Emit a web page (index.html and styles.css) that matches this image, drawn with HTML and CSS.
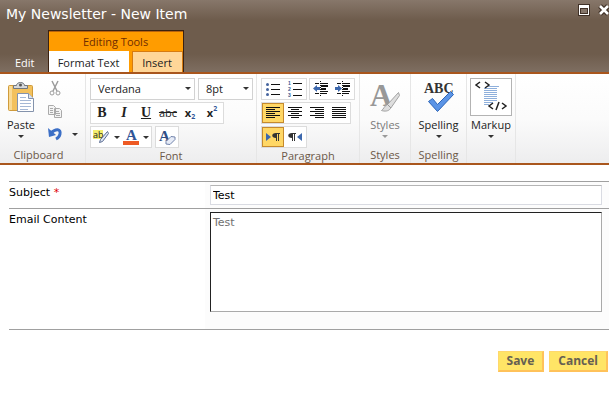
FILE: index.html
```html
<!DOCTYPE html>
<html lang="en">
<head>
  <meta charset="UTF-8">
  <meta name="viewport" content="width=device-width, initial-scale=1">
  <title>My Newsletter - New Item</title>
  <link rel="stylesheet" href="styles.css">
</head>
<body>

  <header class="dialog-header">
    <div class="title-bar">
      <h1>My Newsletter - New Item</h1>
      <div class="window-buttons">
        <button type="button" aria-label="Maximize">
          <svg width="12" height="12" viewBox="0 0 12 12"><path fill="#403127" d="M0 0h12v12H0z"/><path fill="#fff" d="M1 1h10v10H1z"/><path fill="#403127" d="M2 4h8v6H2z"/><path fill="#85766a" d="M3 5h6v4H3z"/></svg>
        </button>
        <button type="button" aria-label="Close">
          <svg width="12" height="12" viewBox="0 0 12 12"><path stroke="#403127" stroke-width="5" d="M2 2l8 8M10 2l-8 8"/><path stroke="#fff" stroke-width="2.6" d="M2 2l8 8M10 2l-8 8"/></svg>
        </button>
      </div>
    </div>
    <nav class="tabs">
      <a class="tab" href="#edit">Edit</a>
      <div class="tab-group">
        <div class="tab-group-title">Editing Tools</div>
        <div class="tab-group-items">
          <a class="tab tab-active" href="#format">Format Text</a>
          <a class="tab tab-insert" href="#insert">Insert</a>
        </div>
      </div>
    </nav>
  </header>

  <div class="ribbon">
    <section class="group group-clipboard">
      <div class="group-body">
        <button type="button" class="large">
          <svg width="32" height="32" viewBox="0 0 32 32"><rect x="3.500" y="4.500" width="24" height="25" rx="1" fill="#f3c15c" stroke="#cf9b3c"/><path fill="#f9da94" d="M4 5h3v24H4z"/><path fill="#d5d8dc" stroke="#707780" d="M8.500 7.500v-3h3c0-4 8-4 8 0h3v3z"/><circle cx="15.500" cy="4" r="1.500" fill="#555"/><path fill="#fff" stroke="#8493ac" d="M12.500 12.500h11l5 5v13h-16z"/><path fill="#dbe3ef" stroke="#8493ac" d="M23.500 12.500v5h5"/><path stroke="#a5b8d5" d="M15 16.500h6M15 19.500h11M15 22.500h11M15 25.500h11M15 28.500h8"/></svg>
          <span>Paste</span>
          <i class="caret"></i>
        </button>
        <div class="small-stack">
          <button type="button" aria-label="Cut">
            <svg width="16" height="16" viewBox="0 0 16 16" fill="none" stroke="#9c9c9c"><path stroke-width="1.500" d="M5 1l5 10M11 1L6 11"/><circle cx="5" cy="13" r="2"/><circle cx="11" cy="13" r="2"/></svg>
          </button>
          <button type="button" aria-label="Copy">
            <svg width="16" height="16" viewBox="0 0 16 16" fill="#f4f4f4" stroke="#aaa"><path d="M1.500 2.500h5l2 2v7h-7zM7.500 5.500h5l2 2v7h-7z"/><path d="M3 5.500h3M3 7.500h3M3 9.500h3M9 8.500h3M9 10.500h4M9 12.500h4"/></svg>
          </button>
          <button type="button" class="undo" aria-label="Undo">
            <svg width="16" height="16" viewBox="0 0 16 16"><path fill="none" stroke="#3c6fc6" stroke-width="3" d="M4 7c5-5 10-4 9 1-.5 3-2 4-4 5"/><path fill="#3c6fc6" d="M1 2l1 9 7-2z"/></svg>
            <i class="caret"></i>
          </button>
        </div>
      </div>
      <h2>Clipboard</h2>
    </section>

    <section class="group group-font">
      <div class="group-body rows">
        <div class="row">
          <div class="drop drop-font"><select aria-label="Font"><option>Verdana</option></select></div>
          <div class="drop drop-size"><select aria-label="Font size"><option>8pt</option></select></div>
        </div>
        <div class="row">
          <div class="box">
            <button type="button" class="glyph bold">B</button>
            <button type="button" class="glyph italic">I</button>
            <button type="button" class="glyph underline">U</button>
            <button type="button" class="strike">abc</button>
            <button type="button" class="script">x<sub>2</sub></button>
            <button type="button" class="script">x<sup>2</sup></button>
          </div>
        </div>
        <div class="row">
          <div class="box">
            <button type="button" class="wide" aria-label="Highlight">
              <svg width="18" height="18" viewBox="0 0 18 18"><path fill="#f4ee6e" d="M1 2h10v9H1z"/><text x="1" y="10" font-size="9" fill="#222">ab</text><path fill="#dfe7f5" stroke="#5a6c91" d="M15.500 3.500l1 2-6 8-3 1 1-3z"/></svg>
              <i class="caret"></i>
            </button>
            <button type="button" class="wide" aria-label="Font color">
              <svg width="16" height="18" viewBox="0 0 16 18"><text class="serif-a" x="3" y="12" font-size="15" fill="#2f5597">A</text><path fill="#ee5a24" d="M0 13h16v4H0z"/></svg>
              <i class="caret"></i>
            </button>
          </div>
          <div class="box box-clear">
            <button type="button" aria-label="Clear format">
              <svg width="18" height="18" viewBox="0 0 18 18"><text class="serif-a" x="1" y="13" font-size="15" fill="#2f4f86">A</text><path fill="#e7ecf7" stroke="#7183ab" d="M13 8.500l4 .5v2.500l-5 5-4-.5v-2.500z"/></svg>
            </button>
          </div>
        </div>
      </div>
      <h2>Font</h2>
    </section>

    <section class="group group-paragraph">
      <div class="group-body rows">
        <div class="row">
          <div class="box">
            <button type="button" aria-label="Bullets">
              <svg width="16" height="16" viewBox="0 0 16 16"><path stroke="#111" d="M6 3.500h9M6 8.500h9M6 13.500h9"/><g fill="#46649e"><circle cx="2.500" cy="3.500" r="1.500"/><circle cx="2.500" cy="8.500" r="1.500"/><circle cx="2.500" cy="13.500" r="1.500"/></g></svg>
            </button>
            <button type="button" aria-label="Numbering">
              <svg width="16" height="18" viewBox="0 0 16 18"><path stroke="#111" d="M6 3.500h9M6 9.500h9M6 15.500h9"/><g class="digits" fill="#35558f" font-size="5"><text x="1" y="5">1</text><text x="1" y="11">2</text><text x="1" y="17">3</text></g></svg>
            </button>
          </div>
          <div class="box">
            <button type="button" aria-label="Decrease indent">
              <svg width="16" height="16" viewBox="0 0 16 16"><path stroke="#111" d="M2 2.500h4M8 2.500h7M2 12.500h4M8 12.500h6"/><path stroke="#111" stroke-width="2" d="M8 5h7M8 8h5"/><path stroke="#111" d="M8 10.500h7"/><path stroke="#111" stroke-dasharray="1 1" d="M7.500 0v16"/><path fill="#3d68ad" d="M0 7.500L4 4v2h3v3H4v2z"/></svg>
            </button>
            <button type="button" aria-label="Increase indent">
              <svg width="16" height="16" viewBox="0 0 16 16"><path stroke="#111" d="M2 2.500h4M8 2.500h7M2 12.500h4M8 12.500h6"/><path stroke="#111" stroke-width="2" d="M8 5h7M8 8h5"/><path stroke="#111" d="M8 10.500h7"/><path stroke="#111" stroke-dasharray="1 1" d="M7.500 0v16"/><path fill="#3d68ad" d="M7 7.500L3 4v2H0v3h3v2z"/></svg>
            </button>
          </div>
        </div>
        <div class="row">
          <div class="box">
            <button type="button" class="pressed" aria-label="Align left">
              <svg width="16" height="16" viewBox="0 0 16 16"><path stroke="#111" d="M1 2.500h14M1 4.500h9M1 6.500h14M1 8.500h9M1 10.500h14M1 12.500h9"/></svg>
            </button>
            <button type="button" aria-label="Center">
              <svg width="16" height="16" viewBox="0 0 16 16"><path stroke="#111" d="M1 2.500h14M4 4.500h8M1 6.500h14M4 8.500h8M1 10.500h14M4 12.500h8"/></svg>
            </button>
            <button type="button" aria-label="Align right">
              <svg width="16" height="16" viewBox="0 0 16 16"><path stroke="#111" d="M1 2.500h14M6 4.500h9M1 6.500h14M6 8.500h9M1 10.500h14M6 12.500h9"/></svg>
            </button>
            <button type="button" aria-label="Justify">
              <svg width="16" height="16" viewBox="0 0 16 16"><path stroke="#111" d="M1 2.500h14M1 4.500h14M1 6.500h14M1 8.500h14M1 10.500h14M1 12.500h14"/></svg>
            </button>
          </div>
        </div>
        <div class="row">
          <div class="box">
            <button type="button" class="pressed" aria-label="Left to right">
              <svg width="16" height="16" viewBox="0 0 16 16"><path fill="#3d68ad" d="M1 4l5 4-5 4z"/><path fill="#333" d="M15 4v1h-1v7h-1V5h-1v7h-1V9c-5 0-5-5 0-5z"/></svg>
            </button>
            <button type="button" aria-label="Right to left">
              <svg width="16" height="16" viewBox="0 0 16 16"><path fill="#3d68ad" d="M15 4l-5 4 5 4z"/><path fill="#333" d="M9 4v1H8v7H7V5H6v7H5V9C0 9 0 4 5 4z"/></svg>
            </button>
          </div>
        </div>
      </div>
      <h2>Paragraph</h2>
    </section>

    <section class="group group-styles">
      <div class="group-body">
        <button type="button" class="large" disabled>
          <svg width="32" height="32" viewBox="0 0 32 32"><text class="serif-a" x="1" y="25" font-size="31" fill="#989898">A</text><path fill="#dedede" stroke="#a2a2a2" d="M29.500 11.500l1 3-9 13c-2 3-6 3-9 2 2-1 3-5 6-6z"/><path stroke="#999" d="M18 23l4 4"/></svg>
          <span>Styles</span>
          <i class="caret"></i>
        </button>
      </div>
      <h2>Styles</h2>
    </section>

    <section class="group group-spelling">
      <div class="group-body">
        <button type="button" class="large">
          <svg width="32" height="32" viewBox="0 0 32 32"><text class="serif-a" x="1" y="12" font-size="14" fill="#333">ABC</text><path fill="#5b94e6" stroke="#2d65b8" d="M5.500 20.500l4-3 5 6 13-13 3 3-16 17z"/></svg>
          <span>Spelling</span>
          <i class="caret"></i>
        </button>
      </div>
      <h2>Spelling</h2>
    </section>

    <section class="group group-markup">
      <div class="group-body">
        <button type="button" class="large framed">
          <svg width="32" height="32" viewBox="0 0 32 32"><path stroke="#8fb0dc" d="M12 5.500h12M9 7.500h13M9 9.500h13M9 11.500h13M9 13.500h13M9 15.500h13M9 17.500h13M9 19.500h13M9 21.500h9M9 23.500h5"/><path fill="none" stroke="#222" stroke-width="1.500" d="M5 1L1 4l4 3M10 1l4 3-4 3M18 22l-4 3 4 3M27 22l4 3-4 3M24 21l-3 8"/></svg>
          <span>Markup</span>
          <i class="caret"></i>
        </button>
      </div>
    </section>
  </div>

  <form class="item-form">
    <div class="field">
      <label for="subject">Subject <span class="required">*</span></label>
      <div class="control"><input type="text" id="subject" value="Test"></div>
    </div>
    <div class="field field-content">
      <label for="content">Email Content</label>
      <div class="control"><textarea id="content">Test</textarea></div>
    </div>
    <div class="actions">
      <button type="submit">Save</button>
      <button type="button">Cancel</button>
    </div>
  </form>

</body>
</html>
```
FILE: styles.css
```css
:root {
  --accent: #a9561d;
  --ui-font: "Open Sans", "Noto Sans", sans-serif;
  --form-font: "DejaVu Sans", sans-serif;
}

* {
  box-sizing: border-box;
}

body {
  margin: 0;
  background: #fff;
  font-family: var(--ui-font);
  font-size: 11px;
  line-height: 16px;
  color: #222;
}

button {
  display: flex;
  align-items: center;
  justify-content: center;
  margin: 0;
  padding: 0;
  border: 0;
  background: none;
  color: inherit;
  font: inherit;
}

svg {
  display: block;
  flex: none;
  overflow: visible;
}

h1, h2 {
  margin: 0;
  font-weight: normal;
}

/* header */
.dialog-header {
  background: linear-gradient(#87776a, #6e5c4c 20px, #6e5c4c 54px, #7e6e61);
  border-bottom: 2px solid var(--accent);
}

.title-bar {
  display: flex;
  justify-content: space-between;
  height: 30px;
  padding-left: 6px;
  overflow: hidden;
}

.title-bar h1 {
  font-family: var(--form-font);
  font-size: 14px;
  line-height: 28px;
  color: #fff;
  white-space: nowrap;
}

.window-buttons {
  display: flex;
  gap: 8px;
  align-items: flex-start;
  padding-top: 4px;
  margin-right: -1px;
}

.tabs {
  display: flex;
  align-items: flex-end;
}

.tab {
  padding: 4px 13px 1px 15px;
  color: #fff;
  text-decoration: none;
  white-space: nowrap;
}

.tab-group {
  width: 136px;
  background: #ff9c00;
  border: 1px solid #3c2210;
  border-bottom: 0;
}

.tab-group-title {
  height: 20px;
  line-height: 19px;
  border-top: 1px solid #b9630c;
  text-align: center;
  color: #6f2c00;
}

.tab-group-items {
  display: flex;
  gap: 3px;
}

.tab-group .tab {
  height: 21px;
  padding: 4px 0 0;
  text-align: center;
  color: #222;
}

.tab-group .tab-active {
  width: 80px;
  background: #fff;
}

.tab-group .tab-insert {
  flex: 1;
  background: #ffd698;
  border: 1px solid #d67b11;
  border-bottom: 0;
  padding-top: 3px;
}

/* ribbon */
.ribbon {
  display: flex;
  height: 91px;
  background: linear-gradient(#fff, #fbfbfb 50%, #ededee);
  border-bottom: 2px solid var(--accent);
  overflow: hidden;
}

.group {
  display: flex;
  flex-direction: column;
  flex: none;
  border-right: 1px solid #e6e6e6;
}

.group-body {
  display: flex;
  justify-content: center;
  height: 74px;
  padding-top: 4px;
}

.group h2 {
  font-size: 11px;
  line-height: 16px;
  text-align: center;
  color: #6b5848;
}

.group-clipboard { width: 86px; }
.group-font { width: 171px; }
.group-paragraph { width: 103px; }
.group-styles { width: 51px; }
.group-spelling { width: 56px; }
.group-markup { width: 49px; }

.group-clipboard h2 {
  padding-right: 8px;
}

.group-clipboard .group-body {
  justify-content: flex-start;
  gap: 10px;
  padding-left: 5px;
}

.large {
  flex-direction: column;
  justify-content: flex-start;
  align-self: flex-start;
  padding-top: 3px;
}

.large span {
  margin: 4px 0 2px;
}

.large:disabled {
  color: #7a7a7a;
}

.large:disabled .caret {
  border-top-color: #999;
}

.framed {
  padding-top: 0;
}

.framed svg {
  width: 42px;
  height: 38px;
  padding: 2px 4px;
  border: 1px solid #b3b3b3;
  background: #fff;
}

.framed span {
  margin-top: 1px;
}

.caret {
  border: 3px solid transparent;
  border-top-color: #333;
  border-bottom: 0;
}

.small-stack {
  display: flex;
  flex-direction: column;
  align-items: flex-start;
  gap: 7px;
  padding-top: 2px;
}

.undo {
  gap: 9px;
}

.rows {
  flex-direction: column;
  justify-content: flex-start;
  gap: 2px;
  padding-left: 4px;
}

.row {
  display: flex;
  gap: 3px;
}

.box {
  display: flex;
  height: 22px;
  background: #fff;
  border: 1px solid #dcdcdc;
}

.box button {
  width: 22px;
  height: 20px;
}

.group-paragraph .row {
  gap: 2px;
}

.box .wide {
  width: 30px;
  gap: 4px;
}

.box .pressed {
  background: #ffd765;
  border: 1px solid #c68a2d;
}

.drop {
  position: relative;
}

.drop::after {
  content: "";
  position: absolute;
  top: 9px;
  right: 4px;
  border: 3px solid transparent;
  border-top-color: #333;
  border-bottom: 0;
  pointer-events: none;
}

.drop select {
  appearance: none;
  display: block;
  width: 100%;
  height: 22px;
  padding: 0 7px;
  border: 1px solid #d2d2d2;
  border-radius: 0;
  background: #fff;
  color: #222;
  font: inherit;
}

.drop-font { width: 105px; }
.drop-size { width: 55px; }

.glyph {
  font-family: "Liberation Serif", serif;
  font-size: 14px;
  font-weight: bold;
}

.italic {
  font-style: italic;
}

.underline {
  text-decoration: underline;
}

.strike {
  text-decoration: line-through;
}

.script {
  font-weight: bold;
}

.script sub,
.script sup {
  font-size: 7px;
  line-height: 8px;
  color: #2f5597;
}

.script sub {
  align-self: flex-end;
  padding-bottom: 2px;
}

.script sup {
  align-self: flex-start;
  padding-top: 2px;
}

.serif-a {
  font-family: "Liberation Serif", serif;
  font-weight: bold;
}

.digits {
  font-family: "Liberation Sans", sans-serif;
  font-weight: bold;
}

/* form */
.item-form {
  padding: 16px 0 0 9px;
  font-family: var(--form-font);
}

.field {
  display: flex;
  border-top: 1px solid #a0a0a0;
  min-height: 27px;
  color: #000;
}

.field label {
  flex: none;
  width: 196px;
  padding-top: 3px;
}

.required {
  color: #e00000;
}

.control {
  flex: 1;
  padding: 3px 7px 3px 5px;
  background: #fcfcfc;
}

.control input,
.control textarea {
  display: block;
  width: 100%;
  margin: 0;
  padding: 0 2px;
  border-radius: 0;
  background: #fff;
  font-family: inherit;
  font-size: 11px;
  outline: 0;
}

.control input {
  height: 20px;
  border: 1px solid #d9dbe2;
  border-top-color: #b5b5b5;
  color: #000;
}

.control textarea {
  height: 100px;
  padding-top: 2px;
  border: 1px solid #aaa;
  border-top-color: #222;
  border-left-color: #222;
  line-height: 16px;
  color: #707070;
  resize: none;
}

.field-content {
  min-height: 122px;
  border-bottom: 1px solid #a0a0a0;
}

.actions {
  display: flex;
  justify-content: flex-end;
  gap: 5px;
  padding: 21px 1px 20px 0;
}

.actions button {
  height: 21px;
  padding: 0 8px;
  border: 1px solid #ffd86c;
  border-right: 2px solid #ffc25a;
  border-bottom: 2px solid #ffc25a;
  background: #ffe566;
  font-family: var(--ui-font);
  font-size: 12px;
  font-weight: bold;
  color: #666052;
}
```
